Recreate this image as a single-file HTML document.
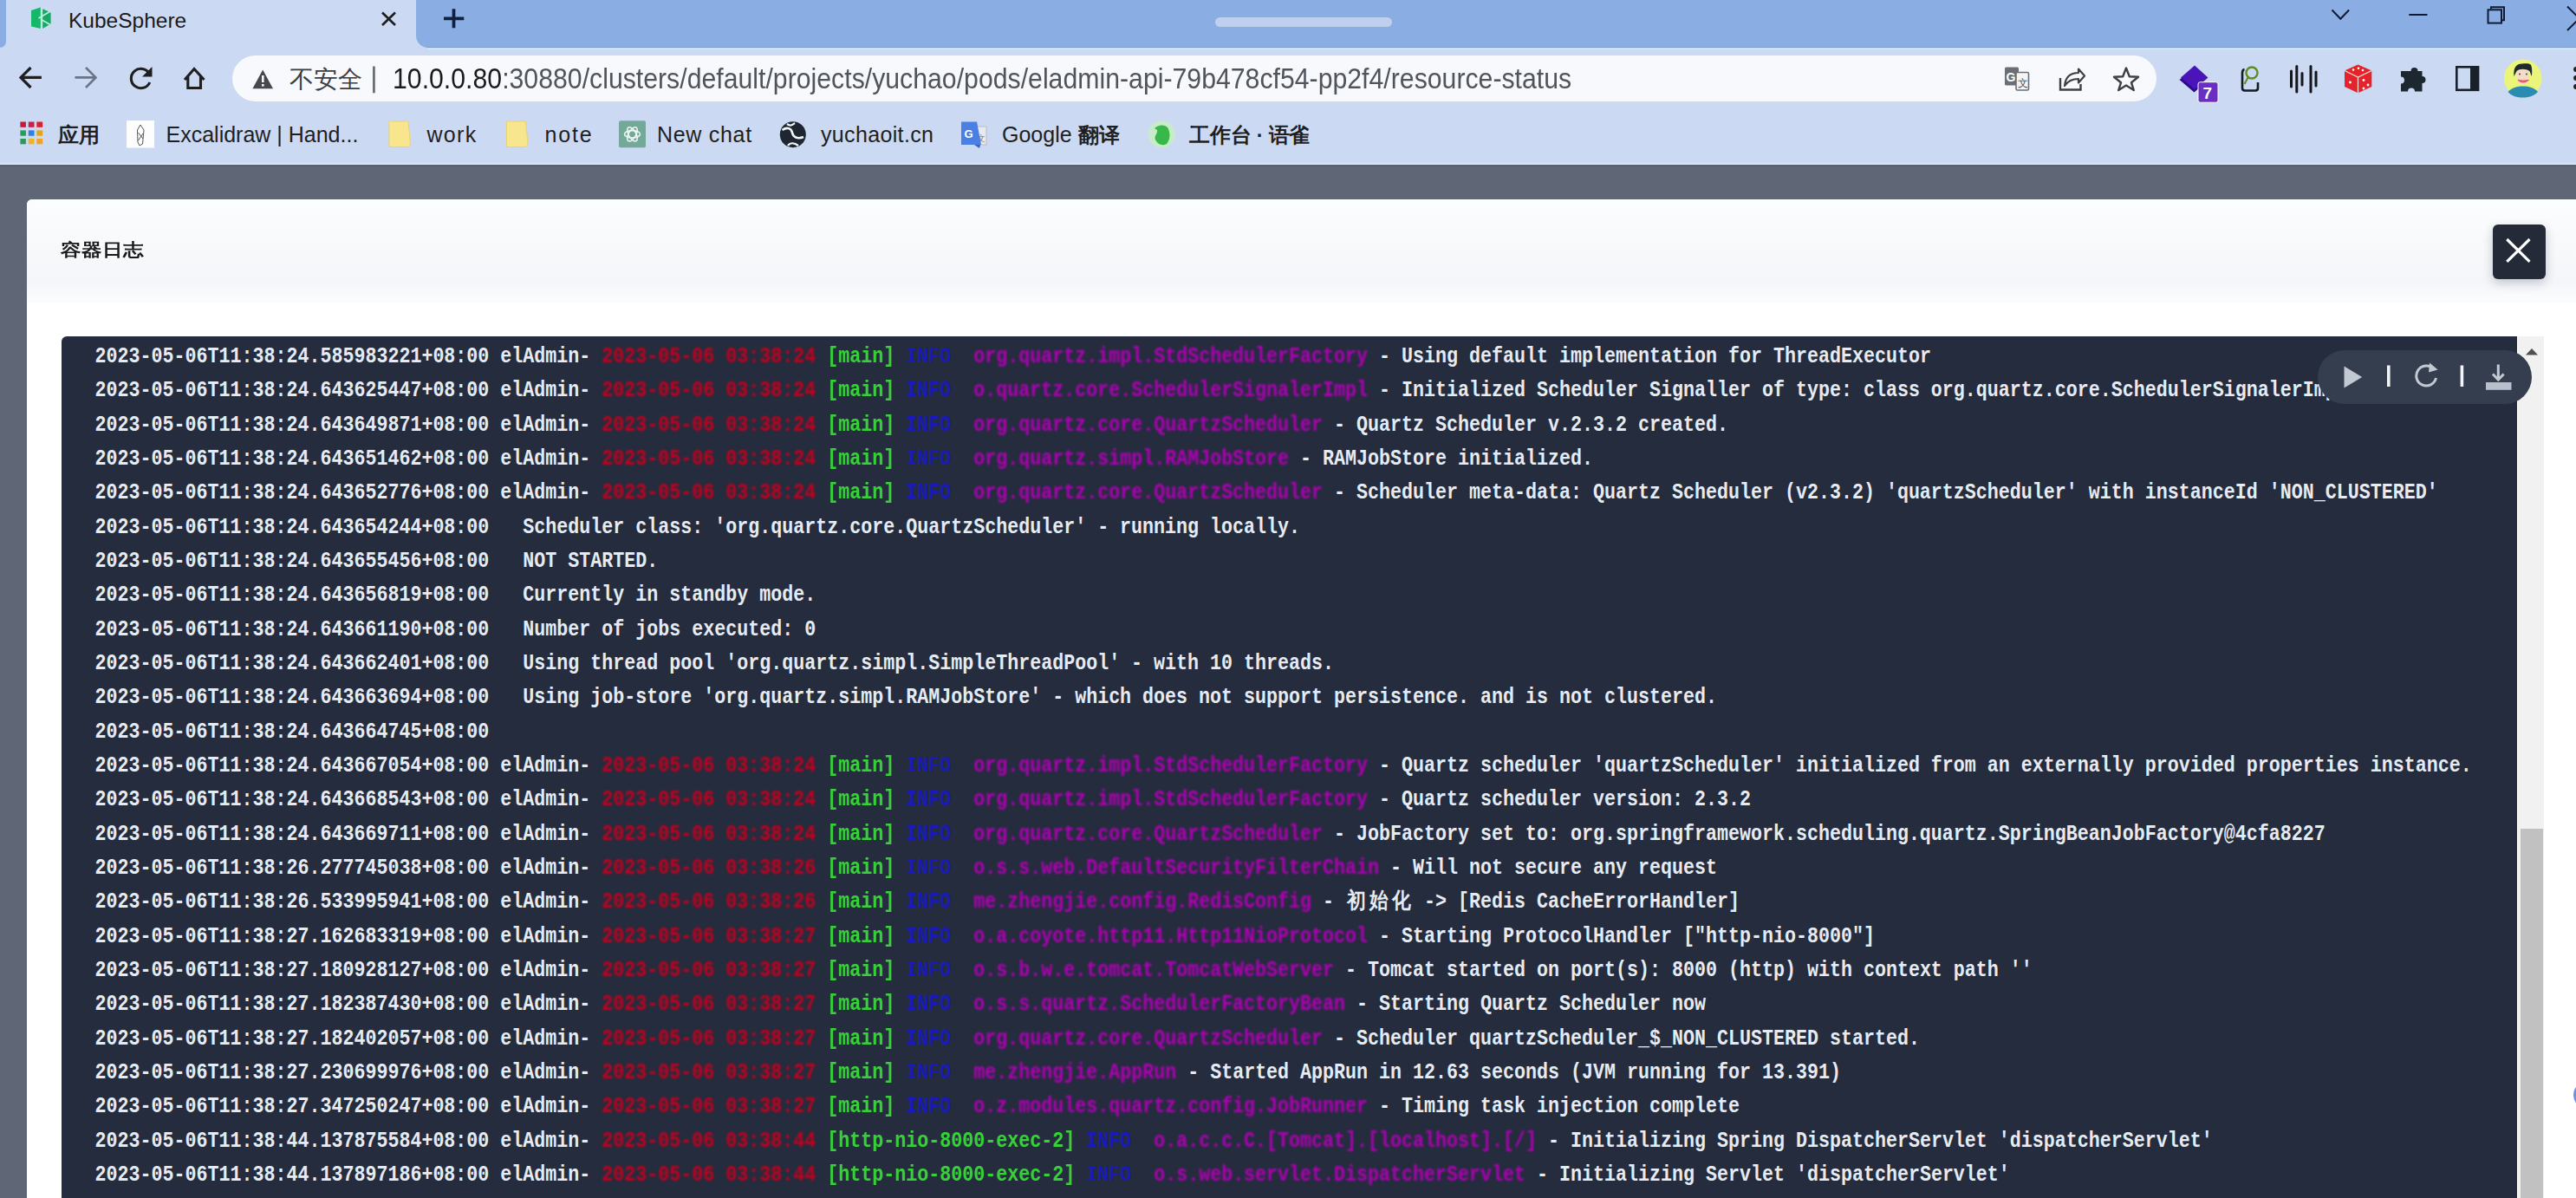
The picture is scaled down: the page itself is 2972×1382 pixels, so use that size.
<!DOCTYPE html>
<html><head><meta charset="utf-8"><title>KubeSphere</title>
<style>
*{box-sizing:border-box}
html,body{margin:0;padding:0}
body{width:2972px;height:1382px;overflow:hidden;position:relative;background:#5f6777;font-family:"Liberation Sans",sans-serif}
.a{position:absolute}
#chrome{left:0;top:0;width:2972px;height:190px;background:#cbd9f2}
#tsL{left:0;top:0;width:7px;height:55px;background:#8aade3;border-bottom-right-radius:8px}
#tsR{left:480px;top:0;width:2492px;height:55px;background:#8aade3;border-bottom-left-radius:14px}
#tabtitle{left:79px;top:9px;font-size:24.5px;color:#1a1a1a;line-height:30px}
#omni{left:268px;top:64px;width:2220px;height:53px;border-radius:26.5px;background:#f7f9fd}
#insecure{left:334px;top:74px;font-size:28px;line-height:36px;color:#3c4043;white-space:pre}
#url{left:453px;top:71px;font-size:33px;line-height:40px;color:#50545b;white-space:pre;transform-origin:0 0;transform:scaleX(0.9165)}
#url b{font-weight:normal;color:#1b1b1b}
.bm{top:141px;font-size:25px;line-height:28px;color:#1f1f1f;white-space:pre}
.cj,.cjs{font-size:23.5px;font-weight:600}
.cj{top:142px}
#overlay{left:0;top:190px;width:2972px;height:1192px;background:#5f6777}
#modal{left:31px;top:230px;width:2960px;height:1200px;background:#fff;border-radius:6px 0 0 0}
#mhead{left:31px;top:230px;width:2960px;height:120px;background:linear-gradient(#fcfdfe,#f4f6f9 80%,#fdfdfe);border-radius:6px 0 0 0}
#mtitle{left:70px;top:272px;font-size:24px;line-height:30px;color:#1a1a1a;font-weight:bold;transform-origin:0 20px;transform:scaleY(0.85)}
#closebtn{left:2875.5px;top:259px;width:61.5px;height:62.5px;background:#242a38;border-radius:6px;box-shadow:0 4px 12px rgba(35,45,65,.25)}
#log{left:71px;top:388px;width:2833px;height:1000px;background:#242c3e;border-radius:6px 0 0 0;overflow:hidden}
.ln{position:absolute;left:38.5px;height:39.34px;line-height:39.34px;white-space:pre;font-family:"Liberation Mono",monospace;font-weight:bold;font-size:21.66px;color:#e6ebf2;transform-origin:0 17px;transform:translateY(1.5px) scaleY(1.15)}
.cjk{display:inline-block;width:26px;text-align:center;font-weight:600}
.r{color:#c4001e;display:inline-block;filter:blur(1.1px)}
.g{color:#38d038}
.b{color:#1a1ab8}
.m{color:#b000b4;display:inline-block;filter:blur(1.1px)}
#sbtrack{left:2905px;top:388px;width:30px;height:994px;background:#f1f1f1}
#sbthumb{left:2908px;top:956px;width:26px;height:430px;background:#c1c1c1}
#pill{left:2674px;top:404px;width:247px;height:62px;border-radius:31px;background:#353e4f}
svg{position:absolute;overflow:visible}
</style></head>
<body>
<div id="chrome" class="a"></div>
<div id="tsL" class="a"></div>
<div id="tsR" class="a"></div>
<div id="tabtitle" class="a">KubeSphere</div>
<div id="omni" class="a"></div>
<div id="insecure" class="a">不安全</div>
<div id="url" class="a"><b>10.0.0.80</b>:30880/clusters/default/projects/yuchao/pods/eladmin-api-79b478cf54-pp2f4/resource-status</div>
<div class="a bm cj" style="left:67px">应用</div>
<div class="a bm" style="left:191.5px">Excalidraw | Hand...</div>
<div class="a bm" style="left:492.5px;letter-spacing:1.3px">work</div>
<div class="a bm" style="left:628.5px;letter-spacing:1.8px">note</div>
<div class="a bm" style="left:758px;letter-spacing:0.7px">New chat</div>
<div class="a bm" style="left:947px;letter-spacing:0.35px">yuchaoit.cn</div>
<div class="a bm" style="left:1156px">Google <span class="cjs">翻译</span></div>
<div class="a bm cj" style="left:1372px;letter-spacing:-0.2px">工作台 · 语雀</div>
<svg width="2972" height="190" style="left:0;top:0" viewBox="0 0 2972 190">
<!-- kubesphere icon -->
<polygon points="36,12 46.8,8.6 46.8,33 36,30.5" fill="#14b86a"/>
<polygon points="49.2,10.2 58.6,14.6 58.6,27.6 49.2,33" fill="#18a866"/>
<path d="M44.5 21 L58.6 12.8 M47.5 22.5 L58 28.5" stroke="#b6f3da" stroke-width="1.7" fill="none"/>
<path d="M48 9 V33.5" stroke="#b6f3da" stroke-width="1.5"/>
<!-- tab close -->
<path d="M441 14.5 L456 29 M456 14.5 L441 29" stroke="#1d1d1d" stroke-width="2.6"/>
<!-- new tab plus -->
<path d="M523.5 10.2 V32.3 M512 21.3 H535.3" stroke="#0f2140" stroke-width="3.7"/>
<!-- tabstrip scroll indicator -->
<rect x="1402" y="20" width="204" height="11" rx="5.5" fill="#bfd0ef"/>
<!-- window controls -->
<path d="M2690.5 11.5 L2700.3 21.8 L2710.1 11.5" stroke="#0e1a36" stroke-width="2" fill="none"/>
<path d="M2779.3 17 H2800.5" stroke="#0e1a36" stroke-width="2"/>
<rect x="2870.5" y="11.3" width="15.5" height="15.3" stroke="#0e1a36" stroke-width="2" fill="none"/>
<path d="M2874 10.3 V8.3 H2889 V23.3 H2887" stroke="#0e1a36" stroke-width="2" fill="none"/>
<path d="M2962 7.5 L2990 35 M2990 7.5 L2962 35" stroke="#0e1a36" stroke-width="2"/>
<!-- back -->
<path d="M47.9 89.4 H25 M35.5 78 L24 89.4 L35.5 101" stroke="#1f1f1f" stroke-width="3.2" fill="none"/>
<!-- forward -->
<path d="M86.5 89.4 H109.5 M99 78 L110.5 89.4 L99 101" stroke="#6c7487" stroke-width="2.6" fill="none"/>
<!-- reload -->
<path d="M172.3 85 A11.2 11.2 0 1 0 172.8 95" stroke="#1f1f1f" stroke-width="3.1" fill="none"/>
<path d="M175.5 77 V88.5 H164 Z" fill="#1f1f1f"/>
<!-- home -->
<path d="M213 92 L224 79.5 L235.5 92 M216.8 88 V101.5 H231.5 V88" stroke="#1f1f1f" stroke-width="3.1" fill="none" stroke-linejoin="miter"/>
<!-- warning -->
<path d="M303.2 80.5 L315 102.2 H291.4 Z" fill="#45494f"/>
<rect x="302" y="87" width="2.6" height="8" fill="#f7f9fd"/><rect x="302" y="97" width="2.6" height="2.6" fill="#f7f9fd"/>
<rect x="430" y="76.5" width="2.8" height="30.8" fill="#6a6e75"/>
<!-- omnibox translate icon -->
<rect x="2313" y="77.5" width="16" height="21" rx="1.5" fill="#6b6f75"/>
<text x="2314.5" y="94" font-family="Liberation Sans" font-weight="bold" font-size="14" fill="#fff">G</text>
<rect x="2326" y="83.5" width="14.5" height="20.5" rx="1.5" fill="#f3f4f6" stroke="#6b6f75" stroke-width="1.6"/>
<text x="2328" y="100" font-family="Liberation Sans" font-size="12" fill="#4a4d52">文</text>
<!-- share -->
<path d="M2377 90 V103.5 H2400.5 V97" stroke="#3c4043" stroke-width="2.4" fill="none"/>
<path d="M2382 99 C2383 88 2390 84 2398 84 V79.5 L2405 87.5 L2398 95.5 V91 C2391 91 2386 93 2382 99 Z" stroke="#3c4043" stroke-width="2.2" fill="none" stroke-linejoin="round"/>
<!-- star -->
<path d="M2453 78.5 L2456.8 88.3 L2467 88.8 L2459 95.3 L2461.8 104 L2453 98.5 L2444.2 104 L2447 95.3 L2439 88.8 L2449.2 88.3 Z" stroke="#3c4043" stroke-width="2.4" fill="none" stroke-linejoin="round"/>
<!-- purple stack ext -->
<path d="M2514.5 92 L2525 84 L2541 98 L2531.5 106.5 Z" fill="#2c0a8a"/>
<path d="M2532 75.5 L2547.5 89.5 L2532 103 L2516 89.5 Z" fill="#4a14b8"/>
<rect x="2536" y="94.7" width="23" height="23.5" rx="2.5" fill="#6a2ec2" stroke="#fff" stroke-width="1"/>
<text x="2541.5" y="114" font-family="Liberation Sans" font-weight="bold" font-size="19" fill="#fff">7</text>
<!-- lens ext -->
<circle cx="2598" cy="84" r="6.5" stroke="#5e8c24" stroke-width="2.4" fill="none"/>
<path d="M2589.5 80 Q2587 80.5 2587 84 V101.5 Q2587 104.5 2590 104.5 H2602 Q2605 104.5 2605 101.5 V95" stroke="#151b24" stroke-width="2.6" fill="none"/>
<path d="M2593.5 89.5 L2589.5 97" stroke="#5e8c24" stroke-width="2"/>
<!-- audio wave -->
<g stroke="#15151a" stroke-width="3" stroke-linecap="round">
<path d="M2643.5 82 V100"/><path d="M2649.8 76.5 V106"/><path d="M2656 84.5 V98"/><path d="M2666 76.5 V106"/><path d="M2672 83 V99"/>
</g>
<!-- red dice -->
<path d="M2720.5 74.5 L2736.3 81.5 V100 L2720.5 107.3 L2705 100 V81.5 Z" fill="#e3252b"/>
<path d="M2705 81.5 L2720.5 89 L2736.3 81.5 M2720.5 89 V107.3" stroke="#ffd8d8" stroke-width="1.3" fill="none"/>
<g fill="#fff"><circle cx="2715" cy="80.5" r="1.3"/><circle cx="2721" cy="78.8" r="1.3"/><circle cx="2726" cy="81" r="1.3"/><circle cx="2711.5" cy="95" r="1.4"/><circle cx="2727" cy="92.5" r="1.4"/><circle cx="2732" cy="98" r="1.4"/><circle cx="2727" cy="102" r="1.4"/></g>
<!-- puzzle -->
<path d="M2776 82 H2781.5 A4 4 0 1 1 2789.5 82 H2794.5 V88 A4 4 0 1 1 2794.5 96 V105.5 H2786 A4 4 0 1 0 2778 105.5 H2770 V96.5 A4 4 0 1 0 2770 88.5 V82 Z" fill="#1d2730"/>
<!-- sidepanel -->
<rect x="2834.3" y="77.3" width="24.8" height="26.5" stroke="#18202a" stroke-width="2.6" fill="none"/>
<rect x="2850" y="77.3" width="9" height="26.5" fill="#18202a"/>
<!-- avatar -->
<circle cx="2910.8" cy="90.4" r="21.8" fill="#eaf57a"/>
<path d="M2893.5 106 C2898 101 2904 99.5 2910.8 99.5 C2917.5 99.5 2924 101 2928 106 C2923 111 2917 112.6 2910.8 112.6 C2904 112.6 2898 111 2893.5 106 Z" fill="#2a8cb0"/>
<path d="M2903.5 80 C2903.5 90 2904 96 2910.5 98 C2917 96 2918 90 2918 80 Z" fill="#f4dccb"/>
<path d="M2900.5 88 C2899.5 78 2903 73.5 2910 73.5 C2915 73 2919 73 2920 75 C2921.5 78 2921.5 84 2920.8 88 L2918.5 82 C2914 79 2907 79 2903.5 82 Z" fill="#1f2a2a"/>
<path d="M2905 92.3 Q2911 97.5 2917.5 92.3 Q2911 94 2905 92.3 Z" fill="#e0606a" stroke="#e0606a" stroke-width="1.2"/>
<circle cx="2907" cy="85.5" r="0.9" fill="#333"/><circle cx="2915" cy="85.5" r="0.9" fill="#333"/>
<!-- menu dots -->
<g fill="#1f1f1f"><circle cx="2972" cy="80" r="2.9"/><circle cx="2972" cy="90" r="2.9"/><circle cx="2972" cy="100" r="2.9"/></g>
<!-- apps grid -->
<g>
<rect x="23.4" y="140.5" width="6.5" height="6.3" fill="#c41a3a"/><rect x="32.8" y="140.5" width="6.7" height="6.3" fill="#c8204c"/><rect x="42.3" y="140.5" width="6.9" height="6.3" fill="#d8202e"/>
<rect x="23.4" y="150.4" width="6.5" height="6.3" fill="#2a9a56"/><rect x="32.8" y="150.4" width="6.7" height="6.3" fill="#2f80e0"/><rect x="42.3" y="150.4" width="6.9" height="6.3" fill="#e0a818"/>
<rect x="23.4" y="160" width="6.5" height="6.3" fill="#2a9a56"/><rect x="32.8" y="160" width="6.7" height="6.3" fill="#f0b422"/><rect x="42.3" y="160" width="6.9" height="6.3" fill="#f2a420"/>
</g>
<!-- excalidraw -->
<rect x="146" y="139" width="32" height="31.5" fill="#fdfdfd"/>
<path d="M162 144 L166 150 L164.5 166 L161 168 L159 164 L158.5 150 Z M159.5 153 L165 160 M165 154 L159.5 162" stroke="#555" stroke-width="1" fill="none"/>
<!-- folders -->
<path d="M449 140 H471 L473.5 166 L471.5 169.5 H449 Z" fill="#f8e68e" stroke="#e9d272" stroke-width="1"/>
<path d="M584.5 140 H606.5 L609 166 L607 169.5 H584.5 Z" fill="#f8e68e" stroke="#e9d272" stroke-width="1"/>
<!-- chatgpt -->
<rect x="714" y="139.3" width="31" height="31" rx="2" fill="#74a99a"/>
<g stroke="#eaf6f1" stroke-width="1.6" fill="none">
<ellipse cx="729.5" cy="154.8" rx="9" ry="4.2"/>
<ellipse cx="729.5" cy="154.8" rx="9" ry="4.2" transform="rotate(60 729.5 154.8)"/>
<ellipse cx="729.5" cy="154.8" rx="9" ry="4.2" transform="rotate(120 729.5 154.8)"/>
</g>
<!-- globe -->
<circle cx="914.8" cy="155.2" r="15" fill="#1d2631"/>
<path d="M902.5 150 C908 146 913 148 914 153 C915 158 920 161 927 158" stroke="#f4f6fa" stroke-width="2.6" fill="none"/>
<path d="M908 143 C912 146 914 144 917 142" stroke="#f4f6fa" stroke-width="2.2" fill="none"/>
<path d="M909 168 C912 164 917 165 921 168" stroke="#f4f6fa" stroke-width="2.2" fill="none"/>
<!-- google translate bm -->
<rect x="1126" y="146" width="12" height="21" fill="#e8eaee" stroke="#b8bcc4" stroke-width="1"/>
<text x="1127" y="163" font-family="Liberation Sans" font-size="10" fill="#777">文</text>
<path d="M1109 140.5 H1127 L1132 167 H1109 Z" fill="#4a80e4"/>
<path d="M1124 167 L1130 171 L1131 167 Z" fill="#3b62b8"/>
<text x="1112.5" y="159" font-family="Liberation Sans" font-weight="bold" font-size="13" fill="#fff">G</text>
<!-- yuque -->
<circle cx="1340.3" cy="154.8" r="15.6" fill="#c8ecc8"/>
<path d="M1332 148 C1336 144 1343 143 1347 147 C1350 152 1351 160 1346 166 C1341 169 1335 166 1333 161 C1331 157 1336 154 1335 150 Z" fill="#38b84a"/>
</svg>

<div id="overlay" class="a"></div>
<div class="a" style="left:492px;top:54px;width:2480px;height:1.3px;background:#7f9ecb"></div>
<div class="a" style="left:494px;top:55.5px;width:2478px;height:1.5px;background:#d3eafb"></div>
<div class="a" style="left:0;top:188px;width:2972px;height:1.5px;background:#d8e6fa"></div>
<div class="a" style="left:0;top:190.5px;width:2972px;height:1.8px;background:#535b6c"></div>
<div id="modal" class="a"></div>
<div id="mhead" class="a"></div>
<div id="mtitle" class="a">容器日志</div>
<div id="closebtn" class="a"></div>
<svg width="2972" height="1382" style="left:0;top:0" viewBox="0 0 2972 1382">
<path d="M2892.3 276 L2918.5 301.8 M2918.5 276 L2892.3 301.8" stroke="#fff" stroke-width="3.2" fill="none"/>
</svg>
<div id="log" class="a">
<div class="ln" style="top:1.98px">2023-05-06T11:38:24.585983221+08:00 elAdmin- <span class="r">2023-05-06 03:38:24</span> <span class="g">[main]</span> <span class="b">INFO</span>  <span class="m">org.quartz.impl.StdSchedulerFactory</span> - Using default implementation for ThreadExecutor</div>
<div class="ln" style="top:41.32px">2023-05-06T11:38:24.643625447+08:00 elAdmin- <span class="r">2023-05-06 03:38:24</span> <span class="g">[main]</span> <span class="b">INFO</span>  <span class="m">o.quartz.core.SchedulerSignalerImpl</span> - Initialized Scheduler Signaller of type: class org.quartz.core.SchedulerSignalerImpl</div>
<div class="ln" style="top:80.66px">2023-05-06T11:38:24.643649871+08:00 elAdmin- <span class="r">2023-05-06 03:38:24</span> <span class="g">[main]</span> <span class="b">INFO</span>  <span class="m">org.quartz.core.QuartzScheduler</span> - Quartz Scheduler v.2.3.2 created.</div>
<div class="ln" style="top:120.00px">2023-05-06T11:38:24.643651462+08:00 elAdmin- <span class="r">2023-05-06 03:38:24</span> <span class="g">[main]</span> <span class="b">INFO</span>  <span class="m">org.quartz.simpl.RAMJobStore</span> - RAMJobStore initialized.</div>
<div class="ln" style="top:159.34px">2023-05-06T11:38:24.643652776+08:00 elAdmin- <span class="r">2023-05-06 03:38:24</span> <span class="g">[main]</span> <span class="b">INFO</span>  <span class="m">org.quartz.core.QuartzScheduler</span> - Scheduler meta-data: Quartz Scheduler (v2.3.2) 'quartzScheduler' with instanceId 'NON_CLUSTERED'</div>
<div class="ln" style="top:198.68px">2023-05-06T11:38:24.643654244+08:00   Scheduler class: 'org.quartz.core.QuartzScheduler' - running locally.</div>
<div class="ln" style="top:238.02px">2023-05-06T11:38:24.643655456+08:00   NOT STARTED.</div>
<div class="ln" style="top:277.36px">2023-05-06T11:38:24.643656819+08:00   Currently in standby mode.</div>
<div class="ln" style="top:316.70px">2023-05-06T11:38:24.643661190+08:00   Number of jobs executed: 0</div>
<div class="ln" style="top:356.04px">2023-05-06T11:38:24.643662401+08:00   Using thread pool 'org.quartz.simpl.SimpleThreadPool' - with 10 threads.</div>
<div class="ln" style="top:395.38px">2023-05-06T11:38:24.643663694+08:00   Using job-store 'org.quartz.simpl.RAMJobStore' - which does not support persistence. and is not clustered.</div>
<div class="ln" style="top:434.72px">2023-05-06T11:38:24.643664745+08:00 </div>
<div class="ln" style="top:474.06px">2023-05-06T11:38:24.643667054+08:00 elAdmin- <span class="r">2023-05-06 03:38:24</span> <span class="g">[main]</span> <span class="b">INFO</span>  <span class="m">org.quartz.impl.StdSchedulerFactory</span> - Quartz scheduler 'quartzScheduler' initialized from an externally provided properties instance.</div>
<div class="ln" style="top:513.40px">2023-05-06T11:38:24.643668543+08:00 elAdmin- <span class="r">2023-05-06 03:38:24</span> <span class="g">[main]</span> <span class="b">INFO</span>  <span class="m">org.quartz.impl.StdSchedulerFactory</span> - Quartz scheduler version: 2.3.2</div>
<div class="ln" style="top:552.74px">2023-05-06T11:38:24.643669711+08:00 elAdmin- <span class="r">2023-05-06 03:38:24</span> <span class="g">[main]</span> <span class="b">INFO</span>  <span class="m">org.quartz.core.QuartzScheduler</span> - JobFactory set to: org.springframework.scheduling.quartz.SpringBeanJobFactory@4cfa8227</div>
<div class="ln" style="top:592.08px">2023-05-06T11:38:26.277745038+08:00 elAdmin- <span class="r">2023-05-06 03:38:26</span> <span class="g">[main]</span> <span class="b">INFO</span>  <span class="m">o.s.s.web.DefaultSecurityFilterChain</span> - Will not secure any request</div>
<div class="ln" style="top:631.42px">2023-05-06T11:38:26.533995941+08:00 elAdmin- <span class="r">2023-05-06 03:38:26</span> <span class="g">[main]</span> <span class="b">INFO</span>  <span class="m">me.zhengjie.config.RedisConfig</span> - <span class="cjk">初</span><span class="cjk">始</span><span class="cjk">化</span> -&gt; [Redis CacheErrorHandler]</div>
<div class="ln" style="top:670.76px">2023-05-06T11:38:27.162683319+08:00 elAdmin- <span class="r">2023-05-06 03:38:27</span> <span class="g">[main]</span> <span class="b">INFO</span>  <span class="m">o.a.coyote.http11.Http11NioProtocol</span> - Starting ProtocolHandler ["http-nio-8000"]</div>
<div class="ln" style="top:710.10px">2023-05-06T11:38:27.180928127+08:00 elAdmin- <span class="r">2023-05-06 03:38:27</span> <span class="g">[main]</span> <span class="b">INFO</span>  <span class="m">o.s.b.w.e.tomcat.TomcatWebServer</span> - Tomcat started on port(s): 8000 (http) with context path ''</div>
<div class="ln" style="top:749.44px">2023-05-06T11:38:27.182387430+08:00 elAdmin- <span class="r">2023-05-06 03:38:27</span> <span class="g">[main]</span> <span class="b">INFO</span>  <span class="m">o.s.s.quartz.SchedulerFactoryBean</span> - Starting Quartz Scheduler now</div>
<div class="ln" style="top:788.78px">2023-05-06T11:38:27.182402057+08:00 elAdmin- <span class="r">2023-05-06 03:38:27</span> <span class="g">[main]</span> <span class="b">INFO</span>  <span class="m">org.quartz.core.QuartzScheduler</span> - Scheduler quartzScheduler_$_NON_CLUSTERED started.</div>
<div class="ln" style="top:828.12px">2023-05-06T11:38:27.230699976+08:00 elAdmin- <span class="r">2023-05-06 03:38:27</span> <span class="g">[main]</span> <span class="b">INFO</span>  <span class="m">me.zhengjie.AppRun</span> - Started AppRun in 12.63 seconds (JVM running for 13.391)</div>
<div class="ln" style="top:867.46px">2023-05-06T11:38:27.347250247+08:00 elAdmin- <span class="r">2023-05-06 03:38:27</span> <span class="g">[main]</span> <span class="b">INFO</span>  <span class="m">o.z.modules.quartz.config.JobRunner</span> - Timing task injection complete</div>
<div class="ln" style="top:906.80px">2023-05-06T11:38:44.137875584+08:00 elAdmin- <span class="r">2023-05-06 03:38:44</span> <span class="g">[http-nio-8000-exec-2]</span> <span class="b">INFO</span>  <span class="m">o.a.c.c.C.[Tomcat].[localhost].[/]</span> - Initializing Spring DispatcherServlet 'dispatcherServlet'</div>
<div class="ln" style="top:946.14px">2023-05-06T11:38:44.137897186+08:00 elAdmin- <span class="r">2023-05-06 03:38:44</span> <span class="g">[http-nio-8000-exec-2]</span> <span class="b">INFO</span>  <span class="m">o.s.web.servlet.DispatcherServlet</span> - Initializing Servlet 'dispatcherServlet'</div>
</div>
<div id="sbtrack" class="a"></div>
<div id="sbthumb" class="a"></div>
<div id="pill" class="a"></div>
<div class="a" style="left:2969px;top:1247px;width:32px;height:32px;border-radius:16px;background:#6a8ef0"></div>
<svg width="2972" height="1382" style="left:0;top:0" viewBox="0 0 2972 1382">
<path d="M2704.5 422.6 L2725.2 435.1 L2704.5 447.6 Z" fill="#c3c9d3"/>
<rect x="2754" y="421.5" width="3.6" height="24.5" fill="#f2f4f8"/>
<path d="M2808 426 A11.5 11.5 0 1 0 2810.5 436" stroke="#c3c9d3" stroke-width="3" fill="none"/>
<path d="M2803 418.5 L2812.5 426.5 L2802 429.5 Z" fill="#c3c9d3"/>
<rect x="2838.6" y="421.5" width="3.6" height="24.5" fill="#f2f4f8"/>
<path d="M2882.3 420.4 V437.5 M2876 431.5 L2882.3 438 L2888.6 431.5" stroke="#c3c9d3" stroke-width="3" fill="none"/>
<rect x="2868" y="441" width="29.5" height="8.8" fill="#b9c0cb"/>
<path d="M2914 409.6 L2921 402 L2928 409.6 Z" fill="#505050"/>
</svg>

</body></html>
